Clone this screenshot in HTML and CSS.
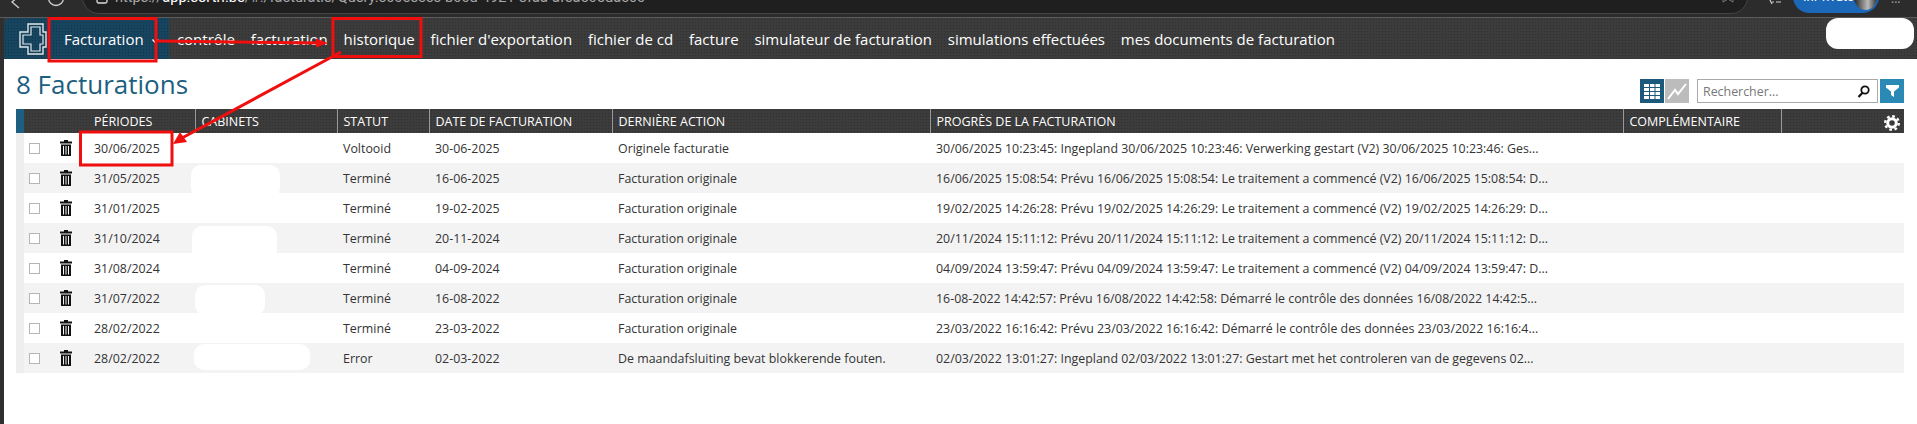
FILE: index.html
```html
<!DOCTYPE html>
<html lang="fr">
<head>
<meta charset="utf-8">
<title>Facturations</title>
<link rel="stylesheet" href="styles.css">
</head>
<body>
<div class="chrome">
  <div class="chrome-row">
    <svg class="ch-back" width="14" height="12" viewBox="0 0 14 12"><path d="M8 -4 L1 2 L8 8" fill="none" stroke="#cfcfcf" stroke-width="1.3"/></svg>
    <svg class="ch-reload" width="20" height="34" viewBox="0 0 20 34"><circle cx="10" cy="18" r="7.5" fill="none" stroke="#cfcfcf" stroke-width="1.3"/></svg>
    <div class="address">
      <svg class="ch-lock" width="12" height="34" viewBox="0 0 12 34"><rect x="1" y="15" width="10" height="8" rx="1.5" fill="none" stroke="#dcdcdc" stroke-width="1.3"/></svg>
      <span class="url"><span class="url-dim">https://</span>app.sortri.be<span class="url-dim">/#!/facturatie/Query.c00eeccc-b00d-4921-8faa-afea505dac60</span></span>
      <svg class="ch-star" width="14" height="34" viewBox="0 0 14 34"><path d="M2 14 H12 V22 L7 19 L2 22 Z" fill="none" stroke="#777" stroke-width="1"/></svg>
    </div>
    <svg class="ch-fav" width="16" height="34" viewBox="0 0 16 34"><path d="M2 16 L6 24 M6 22 H8 M10 22 H15" fill="none" stroke="#cfcfcf" stroke-width="1.2"/></svg>
    <div class="inprivate"><span class="inprivate-text">InPrivate</span><span class="avatar"></span></div>
    <span class="ch-more">···</span>
  </div>
</div>

<div class="page">
  <nav class="nav">
    <div class="brand">
      <svg class="logo" width="28" height="32" viewBox="0 0 28 32">
        <path d="M9 1 H24 V9 H27 V24 H24 V31 H9 V24 H1 V9 H9 Z" fill="none" stroke="#dfe6ea" stroke-width="1.400"/>
        <path d="M12 4 H21 V12 H24 V21 H21 V28 H12 V21 H4 V12 H12 Z" fill="none" stroke="#dfe6ea" stroke-width="1.200"/>
      </svg>
      <a class="nav-main">Facturation<svg class="caret" width="7" height="5" viewBox="0 0 7 5"><path d="M0.500 0.500 L3.500 4 L6.500 0.500" fill="none" stroke="#fff" stroke-width="1.300"/></svg></a>
    </div>
    <a class="nav-link">contrôle</a>
    <a class="nav-link">facturation</a>
    <a class="nav-link">historique</a>
    <a class="nav-link">fichier d'exportation</a>
    <a class="nav-link">fichier de cd</a>
    <a class="nav-link">facture</a>
    <a class="nav-link">simulateur de facturation</a>
    <a class="nav-link">simulations effectuées</a>
    <a class="nav-link">mes documents de facturation</a>
  </nav>

  <main class="main">
    <div class="head">
      <h1 class="title">8 Facturations</h1>
      <div class="tools">
        <button class="tool tool-grid">
          <svg width="16" height="15" viewBox="0 0 16 15"><rect width="16" height="3" fill="#fff"/><rect y="4" width="16" height="3" fill="#fff"/><rect y="8" width="16" height="3" fill="#fff"/><rect y="12" width="16" height="3" fill="#fff"/><rect x="5" width="1" height="15" fill="#1b5a7a"/><rect x="10.500" width="1" height="15" fill="#1b5a7a"/></svg>
        </button>
        <button class="tool tool-chart">
          <svg width="20" height="17" viewBox="0 0 20 17"><path d="M1 16 L8 7 L11 11 L19 1" fill="none" stroke="#fff" stroke-width="2"/></svg>
        </button>
        <div class="search">
          <span class="search-text">Rechercher...</span>
          <svg width="13" height="13" viewBox="0 0 13 13"><circle cx="8" cy="5" r="3.700" fill="none" stroke="#111" stroke-width="1.800"/><path d="M5.500 7.800 L1.500 12" stroke="#111" stroke-width="2.200"/></svg>
        </div>
        <button class="tool tool-filter">
          <svg width="13" height="12" viewBox="0 0 13 12"><path d="M0 0H13V2.500L8 6.500V12L5 10V6.500L0 2.500Z" fill="#fff"/></svg>
        </button>
      </div>
    </div>

    <table class="grid">
      <colgroup>
        <col class="c-strip"><col class="c-check"><col class="c-trash"><col class="c-period"><col class="c-cab"><col class="c-status"><col class="c-date"><col class="c-action"><col class="c-progress"><col class="c-extra"><col class="c-gear">
      </colgroup>
      <thead>
        <tr>
          <th class="strip-head"></th><th></th><th></th>
          <th>PÉRIODES</th><th>CABINETS</th><th>STATUT</th><th>DATE DE FACTURATION</th><th>DERNIÈRE ACTION</th><th>PROGRÈS DE LA FACTURATION</th><th>COMPLÉMENTAIRE</th>
          <th class="th-gear">
            <svg width="16" height="16" viewBox="0 0 16 16"><circle cx="8" cy="8" r="4.300" fill="none" stroke="#fff" stroke-width="3"/><circle cx="8" cy="8" r="6.800" fill="none" stroke="#fff" stroke-width="2.400" stroke-dasharray="2.700 2.640"/></svg>
          </th>
        </tr>
      </thead>
      <tbody>
        <tr><td class="strip"></td><td><span class="check"></span></td><td class="trash-cell"><svg class="trash" width="12" height="16" viewBox="0 0 12 16"><path d="M4 0H8V1.500H12V3.500H0V1.500H4Z" fill="#111"/><path d="M1 4.500H11V16H1Z M3 6V14.500H4V6Z M5.500 6V14.500H6.500V6Z M8 6V14.500H9V6Z" fill="#111" fill-rule="evenodd"/></svg></td><td>30/06/2025</td><td></td><td>Voltooid</td><td>30-06-2025</td><td>Originele facturatie</td><td>30/06/2025 10:23:45: Ingepland 30/06/2025 10:23:46: Verwerking gestart (V2) 30/06/2025 10:23:46: Ges...</td><td></td><td></td></tr>
        <tr><td class="strip"></td><td><span class="check"></span></td><td class="trash-cell"><svg class="trash" width="12" height="16" viewBox="0 0 12 16"><path d="M4 0H8V1.500H12V3.500H0V1.500H4Z" fill="#111"/><path d="M1 4.500H11V16H1Z M3 6V14.500H4V6Z M5.500 6V14.500H6.500V6Z M8 6V14.500H9V6Z" fill="#111" fill-rule="evenodd"/></svg></td><td>31/05/2025</td><td></td><td>Terminé</td><td>16-06-2025</td><td>Facturation originale</td><td>16/06/2025 15:08:54: Prévu 16/06/2025 15:08:54: Le traitement a commencé (V2) 16/06/2025 15:08:54: D...</td><td></td><td></td></tr>
        <tr><td class="strip"></td><td><span class="check"></span></td><td class="trash-cell"><svg class="trash" width="12" height="16" viewBox="0 0 12 16"><path d="M4 0H8V1.500H12V3.500H0V1.500H4Z" fill="#111"/><path d="M1 4.500H11V16H1Z M3 6V14.500H4V6Z M5.500 6V14.500H6.500V6Z M8 6V14.500H9V6Z" fill="#111" fill-rule="evenodd"/></svg></td><td>31/01/2025</td><td></td><td>Terminé</td><td>19-02-2025</td><td>Facturation originale</td><td>19/02/2025 14:26:28: Prévu 19/02/2025 14:26:29: Le traitement a commencé (V2) 19/02/2025 14:26:29: D...</td><td></td><td></td></tr>
        <tr><td class="strip"></td><td><span class="check"></span></td><td class="trash-cell"><svg class="trash" width="12" height="16" viewBox="0 0 12 16"><path d="M4 0H8V1.500H12V3.500H0V1.500H4Z" fill="#111"/><path d="M1 4.500H11V16H1Z M3 6V14.500H4V6Z M5.500 6V14.500H6.500V6Z M8 6V14.500H9V6Z" fill="#111" fill-rule="evenodd"/></svg></td><td>31/10/2024</td><td></td><td>Terminé</td><td>20-11-2024</td><td>Facturation originale</td><td>20/11/2024 15:11:12: Prévu 20/11/2024 15:11:12: Le traitement a commencé (V2) 20/11/2024 15:11:12: D...</td><td></td><td></td></tr>
        <tr><td class="strip"></td><td><span class="check"></span></td><td class="trash-cell"><svg class="trash" width="12" height="16" viewBox="0 0 12 16"><path d="M4 0H8V1.500H12V3.500H0V1.500H4Z" fill="#111"/><path d="M1 4.500H11V16H1Z M3 6V14.500H4V6Z M5.500 6V14.500H6.500V6Z M8 6V14.500H9V6Z" fill="#111" fill-rule="evenodd"/></svg></td><td>31/08/2024</td><td></td><td>Terminé</td><td>04-09-2024</td><td>Facturation originale</td><td>04/09/2024 13:59:47: Prévu 04/09/2024 13:59:47: Le traitement a commencé (V2) 04/09/2024 13:59:47: D...</td><td></td><td></td></tr>
        <tr><td class="strip"></td><td><span class="check"></span></td><td class="trash-cell"><svg class="trash" width="12" height="16" viewBox="0 0 12 16"><path d="M4 0H8V1.500H12V3.500H0V1.500H4Z" fill="#111"/><path d="M1 4.500H11V16H1Z M3 6V14.500H4V6Z M5.500 6V14.500H6.500V6Z M8 6V14.500H9V6Z" fill="#111" fill-rule="evenodd"/></svg></td><td>31/07/2022</td><td></td><td>Terminé</td><td>16-08-2022</td><td>Facturation originale</td><td>16-08-2022 14:42:57: Prévu 16/08/2022 14:42:58: Démarré le contrôle des données 16/08/2022 14:42:5...</td><td></td><td></td></tr>
        <tr><td class="strip"></td><td><span class="check"></span></td><td class="trash-cell"><svg class="trash" width="12" height="16" viewBox="0 0 12 16"><path d="M4 0H8V1.500H12V3.500H0V1.500H4Z" fill="#111"/><path d="M1 4.500H11V16H1Z M3 6V14.500H4V6Z M5.500 6V14.500H6.500V6Z M8 6V14.500H9V6Z" fill="#111" fill-rule="evenodd"/></svg></td><td>28/02/2022</td><td></td><td>Terminé</td><td>23-03-2022</td><td>Facturation originale</td><td>23/03/2022 16:16:42: Prévu 23/03/2022 16:16:42: Démarré le contrôle des données 23/03/2022 16:16:4...</td><td></td><td></td></tr>
        <tr><td class="strip"></td><td><span class="check"></span></td><td class="trash-cell"><svg class="trash" width="12" height="16" viewBox="0 0 12 16"><path d="M4 0H8V1.500H12V3.500H0V1.500H4Z" fill="#111"/><path d="M1 4.500H11V16H1Z M3 6V14.500H4V6Z M5.500 6V14.500H6.500V6Z M8 6V14.500H9V6Z" fill="#111" fill-rule="evenodd"/></svg></td><td>28/02/2022</td><td></td><td>Error</td><td>02-03-2022</td><td>De maandafsluiting bevat blokkerende fouten.</td><td>02/03/2022 13:01:27: Ingepland 02/03/2022 13:01:27: Gestart met het controleren van de gegevens 02...</td><td></td><td></td></tr>
      </tbody>
    </table>
  </main>
</div>

<div class="blob blob-user"></div>
<div class="blob blob-1"></div>
<div class="blob blob-2"></div>
<div class="blob blob-3"></div>
<div class="blob blob-4"></div>

<svg class="marks" width="1917" height="424" viewBox="0 0 1917 424">
  <rect x="49" y="18.500" width="107" height="42.500" fill="none" stroke="#f00f0f" stroke-width="3"/>
  <rect x="333" y="18.500" width="88" height="38" fill="none" stroke="#f00f0f" stroke-width="3"/>
  <rect x="80.500" y="132" width="91.500" height="33" fill="none" stroke="#f00f0f" stroke-width="3"/>
  <path d="M156 41 L318 43" stroke="#f00f0f" stroke-width="3" fill="none"/>
  <path d="M328 43 L316 38.500 L316 47.500 Z" fill="#f00f0f"/>
  <path d="M341 52 L182 138" stroke="#f00f0f" stroke-width="3" fill="none"/>
  <path d="M173 144 L187 142 L180 132 Z" fill="#f00f0f"/>
</svg>
</body>
</html>
```

FILE: styles.css
```css
* { box-sizing: border-box; }

html, body {
  margin: 0;
  padding: 0;
  height: 424px;
  overflow: hidden;
  background: #fff;
  font-family: "Open Sans", "Liberation Sans", sans-serif;
}

body { position: relative; }

/* browser frame */
.chrome {
  height: 18px;
  overflow: hidden;
  background: #2c2c2c;
  border-bottom: 1px solid #5a5a5a;
}

.chrome-row {
  display: flex;
  align-items: flex-start;
  margin-top: -20px;
  height: 34px;
  color: #ddd;
}

.ch-back { margin: 20px 0 0 11px; }
.ch-reload { margin: 0 0 0 21px; }

.address {
  display: flex;
  align-items: center;
  width: 1666px;
  height: 34px;
  margin-left: 16px;
  padding: 0 12px 0 13px;
  border-radius: 17px;
  background: #1f1f1f;
  border: 1px solid #444;
}

.url {
  flex: 1;
  margin-left: 7px;
  font-family: "Roboto", "Liberation Sans", sans-serif;
  font-size: 14.600px;
  color: #fff;
  white-space: nowrap;
}

.url-dim { color: #a8a8a8; }

.ch-fav { margin-left: 18px; }

.inprivate {
  display: flex;
  align-items: center;
  justify-content: space-between;
  width: 86px;
  height: 33px;
  margin-left: 11px;
  padding: 0 2px 0 10px;
  border-radius: 17px;
  background: #1c68b8;
}

.inprivate-text {
  font-family: "Roboto", "Liberation Sans", sans-serif;
  font-size: 13px;
  color: #fff;
}

.avatar {
  width: 26px;
  height: 26px;
  border-radius: 50%;
  background: linear-gradient(90deg, #222, #bbb 60%, #333);
}

.ch-more {
  margin: 14px 0 0 12px;
  font-size: 12px;
  color: #aaa;
}

/* page */
.page {
  border-left: 4px solid #2f2f2f;
  height: 406px;
  background: #fff;
}

.nav {
  display: flex;
  align-items: center;
  height: 41px;
  background-color: #3c3c3c;
  background-image: radial-gradient(#2f2f2f 0.8px, transparent 0.9px);
  background-size: 3px 3px;
  font-size: 15px;
  color: #fff;
}

.brand {
  display: flex;
  align-items: center;
  align-self: stretch;
  width: 165px;
  padding-left: 15px;
  border-top-left-radius: 6px;
  background-color: #17455f;
  background-image: radial-gradient(#113448 0.8px, transparent 0.9px);
  background-size: 3px 3px;
}

.nav-main {
  margin-left: 17px;
  white-space: nowrap;
  color: #fff;
}

.caret { margin-left: 8px; vertical-align: 1px; }

.nav-link {
  padding: 0 7.900px;
  white-space: nowrap;
  color: #fff;
}

.main { padding: 10px 13px 0 12px; }

.head {
  display: flex;
  justify-content: space-between;
  height: 34px;
  margin-bottom: 6px;
}

.title {
  margin: 0;
  font-size: 26px;
  font-weight: 400;
  line-height: 30px;
  color: #1d5f80;
}

.tools {
  display: flex;
  align-self: flex-end;
  height: 24px;
}

.tool {
  display: flex;
  align-items: center;
  justify-content: center;
  width: 24px;
  height: 24px;
  padding: 0;
  border: 0;
}

.tool-grid { background: #1b5a7a; }
.tool-chart { margin-left: 1px; background: #bcbcbc; }
.tool-filter { margin-left: 2px; background: #2b8ab5; }

.search {
  display: flex;
  align-items: center;
  justify-content: space-between;
  width: 181px;
  height: 24px;
  margin-left: 8px;
  padding: 0 7px 0 5px;
  border: 1px solid #aaa;
  background: #fff;
}

.search-text {
  font-size: 12.400px;
  color: #777;
}

/* table */
.grid {
  width: 1888px;
  table-layout: fixed;
  border-collapse: collapse;
  font-size: 12.400px;
  color: #333;
}

.c-strip { width: 8px; }
.c-check { width: 29px; }
.c-trash { width: 40px; }
.c-period { width: 102px; }
.c-cab { width: 142px; }
.c-status { width: 92px; }
.c-date { width: 183px; }
.c-action { width: 318px; }
.c-progress { width: 693px; }
.c-extra { width: 158px; }
.c-gear { width: 123px; }

.grid thead tr {
  height: 24px;
  background-color: #3c3c3c;
  background-image: radial-gradient(#2f2f2f 0.8px, transparent 0.9px);
  background-size: 3px 3px;
}

.grid th {
  padding: 0 0 0 6px;
  font-weight: 400;
  font-size: 12.500px;
  text-align: left;
  color: #fff;
  border-right: 1px solid #9a9a9a;
  white-space: nowrap;
}

.grid th:nth-child(-n+3) { border-right: 0; }
.grid th:nth-child(4) { padding-left: 1px; }
.grid th:last-child { border-right: 0; }

.grid th.strip-head { background: #1d5f80; }

.grid th.th-gear {
  padding: 4px 4px 0 0;
  text-align: right;
  line-height: 0;
}

.grid td {
  height: 30px;
  padding: 0 0 0 6px;
  white-space: nowrap;
}

.grid td:nth-child(4) { padding-left: 1px; }
.grid td:nth-child(-n+3) { padding-left: 0; }

.grid tbody tr:nth-child(even) { background: #f3f3f3; }

.grid td.strip { background: #eee; }

.check {
  display: block;
  width: 11px;
  height: 11px;
  margin-left: 5px;
  border: 1px solid #b5b5b5;
  background: #fff;
}

.trash-cell { line-height: 0; }
.trash { display: block; margin-left: 7px; }

/* annotations laid over the screenshot */
.blob {
  position: absolute;
  background: #fff;
  border-radius: 10px;
}

.blob-user { left: 1826px; top: 18px; width: 88px; height: 31px; border-radius: 12px; }
.blob-1 { left: 191px; top: 165px; width: 89px; height: 33px; }
.blob-2 { left: 192px; top: 226px; width: 85px; height: 40px; }
.blob-3 { left: 195px; top: 285px; width: 70px; height: 30px; }
.blob-4 { left: 194px; top: 344px; width: 116px; height: 26px; }

.marks {
  position: absolute;
  left: 0;
  top: 0;
  pointer-events: none;
}
```
